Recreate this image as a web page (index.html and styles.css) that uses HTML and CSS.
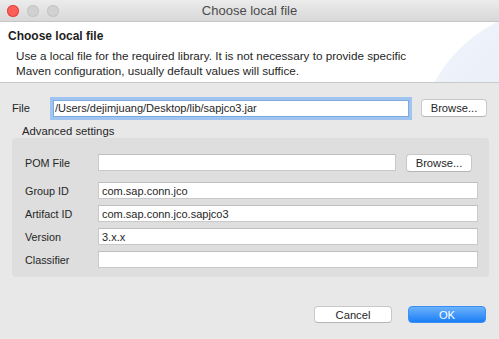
FILE: index.html
```html
<!DOCTYPE html>
<html lang="en">
<head>
  <meta charset="UTF-8">
  <title>Choose local file</title>
  <link rel="stylesheet" href="styles.css">
</head>
<body>
  <div class="window">
    <!-- title bar -->
    <div class="titlebar">
      <div class="lights">
        <span class="light red"></span>
        <span class="light"></span>
        <span class="light"></span>
      </div>
      <div class="title">Choose local file</div>
    </div>

    <!-- header -->
    <div class="header">
      <h2>Choose local file</h2>
      <p>Use a local file for the required library. It is not necessary to provide specific<br>Maven configuration, usually default values will suffice.</p>
    </div>

    <div class="content">
      <div class="file-row">
        <label class="file-label">File</label>
        <input type="text" class="field focus" value="/Users/dejimjuang/Desktop/lib/sapjco3.jar">
        <button class="btn browse">Browse...</button>
      </div>

      <div class="group-title">Advanced settings</div>
      <div class="group">
        <div class="row pom">
          <label>POM File</label>
          <input type="text" class="field">
          <button class="btn browse small">Browse...</button>
        </div>
        <div class="row">
          <label>Group ID</label>
          <input type="text" class="field" value="com.sap.conn.jco">
        </div>
        <div class="row">
          <label>Artifact ID</label>
          <input type="text" class="field" value="com.sap.conn.jco.sapjco3">
        </div>
        <div class="row">
          <label>Version</label>
          <input type="text" class="field" value="3.x.x">
        </div>
        <div class="row">
          <label>Classifier</label>
          <input type="text" class="field">
        </div>
      </div>

      <div class="actions">
        <button class="btn cancel">Cancel</button>
        <button class="btn ok">OK</button>
      </div>
    </div>
  </div>
</body>
</html>
```

FILE: styles.css
```css
body {
  margin: 0;
  padding: 0;
  font-family: 'Liberation Sans', 'Helvetica', sans-serif;
  font-size: 11px;
  color: #262626;
  background: #e8e8e8;
}
.window {
  width: 499px;
  height: 339px;
  background: #e8e8e8;
  overflow: hidden;
}
.titlebar {
  height: 21px;
  border-bottom: 1px solid #c6c6c6;
  background: linear-gradient(to bottom, #ececec, #d8d8d8);
  display: flex;
  align-items: center;
  position: relative;
}
.lights {
  display: flex;
  gap: 8px;
  padding-left: 7px;
}
.light {
  width: 12px;
  height: 12px;
  border-radius: 50%;
  background: #d1d1d1;
  box-shadow: inset 0 0 0 1px #c4c4c4;
}
.light.red {
  background: #fc5f57;
  box-shadow: inset 0 0 0 1px #e2463f;
}
.title {
  position: absolute;
  left: 0;
  right: 0;
  text-align: center;
  font-size: 13px;
  color: #4b4b4b;
}
.header {
  height: 60px;
  background: #fff radial-gradient(circle at 560px 128px, #e4eaf6 0, #eef2fa 142px, #fff 143px);
  border-bottom: 1px solid #c9c9c9;
  padding-left: 8px;
}
.header h2 {
  margin: 0;
  padding-top: 7px;
  font-size: 12px;
  line-height: 14px;
  font-weight: bold;
  color: #1e1e1e;
}
.header p {
  margin: 5px 0 0 8px;
  font-size: 11.7px;
  line-height: 15px;
  color: #262626;
}
.content {
  padding: 14px 10px 0 12px;
}
.file-row {
  display: flex;
  align-items: center;
  height: 22px;
}
.file-label {
  width: 38px;
  font-size: 11.2px;
}
.field {
  box-sizing: border-box;
  height: 17px;
  border: 1px solid #c9c9c9;
  border-top-color: #bfbfbf;
  background: #fff;
  font-family: inherit;
  font-size: 11px;
  color: #262626;
  padding: 0 3px;
  margin: 0;
  outline: none;
}
.file-row .field {
  width: 356px;
  margin-left: 3px;
  height: 17px;
  box-shadow: 0 0 0 3px #9ec4ef;
  border-color: #7ea9de;
  padding-left: 1px;
}
.btn {
  box-sizing: border-box;
  height: 18px;
  background: #fff;
  border: 1px solid #c8c8c8;
  border-bottom-color: #b5b5b5;
  border-radius: 4px;
  font-family: inherit;
  font-size: 11.2px;
  color: #262626;
  padding: 0;
}
.browse {
  width: 66px;
  margin-left: 12px;
}
.group-title {
  margin: 5px 0 0 10px;
  font-size: 11.3px;
  height: 14px;
  line-height: 14px;
}
.group {
  width: 477px;
  box-sizing: border-box;
  background: #dedede;
  border-radius: 4px;
  padding: 16px 11px 9px 13px;
  display: flex;
  flex-direction: column;
  gap: 6px;
}
.row {
  display: flex;
  align-items: center;
  height: 17px;
}
.row label {
  width: 73px;
  font-size: 10.8px;
}
.row .field {
  flex: 1;
}
.row.pom {
  margin-bottom: 5px;
}
.row.pom .field {
  flex: none;
  width: 298px;
}
.browse.small {
  margin-left: 10px;
}
.actions {
  display: flex;
  justify-content: flex-end;
  gap: 16px;
  margin-top: 29px;
  padding-right: 3px;
}
.cancel, .ok {
  width: 78px;
  height: 17px;
}
.ok {
  background: linear-gradient(to bottom, #6cb2fb, #1b7ef6);
  border: 1px solid #3b8ef3;
  color: #fff;
}
```
